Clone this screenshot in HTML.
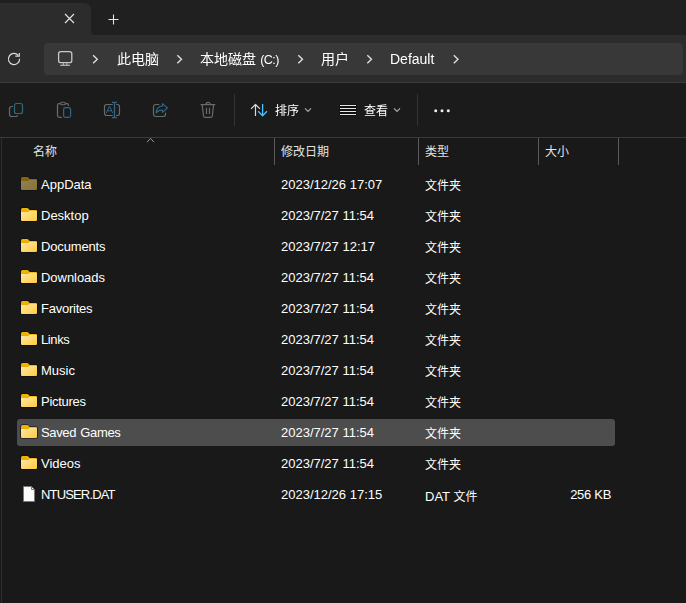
<!DOCTYPE html>
<html lang="zh-CN">
<head>
<meta charset="utf-8">
<title>Default</title>
<style>
html,body{margin:0;padding:0;}
body{width:686px;height:603px;overflow:hidden;background:#191919;position:relative;
  font-family:"Liberation Sans","Noto Sans CJK SC",sans-serif;color:#fff;}
.abs{position:absolute;}
#titlebar{left:0;top:0;width:686px;height:35px;background:#202020;}
#tab{left:0;top:3px;width:91px;height:32px;background:#2c2c2c;border-top-right-radius:7px;}
#tabfoot{left:91px;top:31px;width:4px;height:4px;background:#2c2c2c;}
#tabfoot i{display:block;width:4px;height:4px;background:#202020;border-bottom-left-radius:4px;}
#addr{left:0;top:35px;width:686px;height:47px;background:#2c2c2c;border-bottom:1px solid #3a3a3a;}
#addrbox{left:44px;top:43px;width:639px;height:32px;background:#383838;border-radius:4px;}
#toolbar{left:0;top:83px;width:686px;height:54px;background:#1b1b1b;}
#listtop{left:0;top:137px;width:686px;height:1px;background:#3a3a3a;}
#leftline{left:1px;top:138px;width:1px;height:465px;background:#2e2e2e;}
.crumb{will-change:transform;top:43px;height:32px;line-height:32px;font-size:14px;color:#fff;white-space:nowrap;}
.tsep{width:1px;top:94px;height:32px;background:#333;}
.tbtxt{will-change:transform;top:100px;height:22px;line-height:22px;font-size:12px;color:#fff;white-space:nowrap;}
.colsep{top:138px;width:1px;height:27px;background:#5a5a5a;}
.hd{top:142px;height:20px;line-height:20px;font-size:12px;color:#e4e4e4;white-space:nowrap;}
.row{left:0;width:686px;height:31px;}
.row span{position:absolute;top:0;height:31px;line-height:31px;font-size:13px;color:#fff;white-space:nowrap;}
.row .n{left:41px;}
.row .d{left:281px;}
.row .t{left:425px;font-size:12px;top:2px;}
.row .s{right:75px;}
.row svg{position:absolute;left:21px;top:8px;}
#sel{left:17px;top:419px;width:598px;height:27px;background:#4d4d4d;border-radius:3px;}
</style>
</head>
<body>
<div class="abs" id="titlebar"></div>
<div class="abs" id="tab"></div>
<div class="abs" id="tabfoot"><i></i></div>
<div class="abs" id="addr"></div>
<div class="abs" id="addrbox"></div>
<div class="abs" id="toolbar"></div>
<div class="abs" id="listtop"></div>
<div class="abs" id="leftline"></div>

<!-- breadcrumb text -->
<div class="abs crumb" style="left:117px">此电脑</div>
<div class="abs crumb" style="left:200px">本地磁盘<span style="font-size:12.5px;letter-spacing:-0.5px;word-spacing:1.2px"> (C:)</span></div>
<div class="abs crumb" style="left:321px">用户</div>
<div class="abs crumb" style="left:390px">Default</div>

<!-- toolbar -->
<div class="abs tsep" style="left:234px"></div>
<div class="abs tsep" style="left:417px"></div>
<div class="abs tbtxt" style="left:274.5px">排序</div>
<div class="abs tbtxt" style="left:364px">查看</div>

<!-- header -->
<div class="abs hd" style="left:33px">名称</div>
<div class="abs hd" style="left:281px">修改日期</div>
<div class="abs hd" style="left:425px">类型</div>
<div class="abs hd" style="left:545px">大小</div>
<div class="abs colsep" style="left:274px"></div>
<div class="abs colsep" style="left:418px"></div>
<div class="abs colsep" style="left:538px"></div>
<div class="abs colsep" style="left:618px"></div>

<div class="abs" id="sel"></div>

<div class="abs row" style="top:169px"><span class="n">AppData</span><span class="d">2023/12/26 17:07</span><span class="t">文件夹</span></div>
<div class="abs row" style="top:200px"><span class="n">Desktop</span><span class="d">2023/7/27 11:54</span><span class="t">文件夹</span></div>
<div class="abs row" style="top:231px"><span class="n" style="letter-spacing:-0.15px">Documents</span><span class="d">2023/7/27 12:17</span><span class="t">文件夹</span></div>
<div class="abs row" style="top:262px"><span class="n" style="letter-spacing:-0.04px">Downloads</span><span class="d">2023/7/27 11:54</span><span class="t">文件夹</span></div>
<div class="abs row" style="top:293px"><span class="n" style="letter-spacing:-0.23px">Favorites</span><span class="d">2023/7/27 11:54</span><span class="t">文件夹</span></div>
<div class="abs row" style="top:324px"><span class="n" style="letter-spacing:-0.4px">Links</span><span class="d">2023/7/27 11:54</span><span class="t">文件夹</span></div>
<div class="abs row" style="top:355px"><span class="n">Music</span><span class="d">2023/7/27 11:54</span><span class="t">文件夹</span></div>
<div class="abs row" style="top:386px"><span class="n" style="letter-spacing:-0.29px">Pictures</span><span class="d">2023/7/27 11:54</span><span class="t">文件夹</span></div>
<div class="abs row" style="top:417px"><span class="n" style="letter-spacing:-0.36px;word-spacing:1px">Saved Games</span><span class="d">2023/7/27 11:54</span><span class="t">文件夹</span></div>
<div class="abs row" style="top:448px"><span class="n">Videos</span><span class="d">2023/7/27 11:54</span><span class="t">文件夹</span></div>
<div class="abs row" style="top:479px"><span class="n" style="letter-spacing:-0.84px">NTUSER.DAT</span><span class="d">2023/12/26 17:15</span><span class="t"><em style="font-style:normal;font-size:13px">DAT </em>文件</span><span class="s" style="letter-spacing:-0.3px">256 KB</span></div>
<!--ICONS-->
<svg class="abs" style="left:0;top:0" width="686" height="603" viewBox="0 0 686 603" fill="none">
<defs>
<linearGradient id="fb" x1="0" y1="0" x2="0" y2="1"><stop offset="0" stop-color="#f2b600"/><stop offset="1" stop-color="#dd9a00"/></linearGradient>
<linearGradient id="ff" x1="0" y1="0" x2="1" y2="1"><stop offset="0" stop-color="#ffe9a8"/><stop offset="1" stop-color="#ffca3e"/></linearGradient>
<g id="folder">
<path d="M-0.6 1.6 a2 2 0 0 1 2-2.2 h5.2 l2 2 h6.4 a1.6 1.6 0 0 1 1.6 1.6 v9 a1.6 1.6 0 0 1 -1.6 1.6 h-14 a1.6 1.6 0 0 1 -1.6 -1.6 z" fill="#0a0a10"/>
<path d="M0 1.5 a1.5 1.5 0 0 1 1.5-1.5 h4.8 a1 1 0 0 1 .7.3 l1.7 1.7 h6.3 a1 1 0 0 1 1 1 v8 h-16 z" fill="url(#fb)"/>
<path d="M0 4 h6.6 a1.2 1.2 0 0 0 .8-.3 l.9-.7 a1.2 1.2 0 0 1 .8-.3 h5.9 a1 1 0 0 1 1 1 v8.3 a1 1 0 0 1 -1 1 h-14 a1 1 0 0 1 -1-1 z" fill="url(#ff)"/>
</g>
</defs>
<path d="M65 14 L74 23 M74 14 L65 23" stroke="#e6e6e6" stroke-width="1.1"/>
<path d="M108.5 19.5 H118.5 M113.5 14.5 V24.5" stroke="#e6e6e6" stroke-width="1.1"/>
<path d="M19.6 58.8 A5.6 5.6 0 1 1 18.2 55.3" stroke="#dcdcdc" stroke-width="1.2"/>
<path d="M15.3 56.2 H19.3 V52.9" stroke="#dcdcdc" stroke-width="1.2"/>
<rect x="58.6" y="51.6" width="13.2" height="11.1" rx="2.2" stroke="#c8c8c8" stroke-width="1.3"/>
<path d="M63.4 63 V65 M66.9 63 V65" stroke="#b0b0b0" stroke-width="1.1"/><path d="M60.3 65.3 H69.9" stroke="#b4b4b4" stroke-width="1.3"/>
<path d="M93.1 55.2 L97.3 59.2 L93.1 63.2" stroke="#dedede" stroke-width="1.4"/>
<path d="M177.3 55.2 L181.5 59.2 L177.3 63.2" stroke="#dedede" stroke-width="1.4"/>
<path d="M298.3 55.2 L302.5 59.2 L298.3 63.2" stroke="#dedede" stroke-width="1.4"/>
<path d="M367.3 55.2 L371.5 59.2 L367.3 63.2" stroke="#dedede" stroke-width="1.4"/>
<path d="M453.8 55.2 L458 59.2 L453.8 63.2" stroke="#dedede" stroke-width="1.4"/>
<rect x="14.5" y="103.5" width="8" height="10" rx="2" stroke="#2f6785" stroke-width="1.2"/>
<path d="M12.8 106.5 H11.7 A2.2 2.2 0 0 0 9.5 108.7 V114.3 A2.2 2.2 0 0 0 11.7 116.5 H15.8 A2.2 2.2 0 0 0 17.8 115.2" stroke="#6a6a6a" stroke-width="1.2"/>
<path d="M61.8 117.3 H59.3 A1.8 1.8 0 0 1 57.5 115.5 V105.2 A1.5 1.5 0 0 1 59 103.7 H67 A1.5 1.5 0 0 1 68.5 105.2 V106" stroke="#6a6a6a" stroke-width="1.3"/>
<rect x="60.6" y="102.2" width="4.8" height="2.6" rx="1.3" stroke="#6a6a6a" stroke-width="1.1" fill="#1b1b1b"/>
<rect x="63.6" y="107.6" width="7" height="9.8" rx="1.8" stroke="#2f6785" stroke-width="1.2"/>
<path d="M112.8 104.5 H106.7 A2.2 2.2 0 0 0 104.5 106.7 V113.3 A2.2 2.2 0 0 0 106.7 115.5 H112.8 M116.2 104.5 H117.3 A2.2 2.2 0 0 1 119.5 106.7 V113.3 A2.2 2.2 0 0 1 117.3 115.5 H116.2" stroke="#6a6a6a" stroke-width="1.2"/>
<path d="M114.5 102.2 V117.8 M112 102.3 H117 M112 117.7 H117" stroke="#2f6785" stroke-width="1.3"/>
<path d="M106.3 113 L109.5 106 L112.7 113 M107.4 110.8 H111.6" stroke="#2f6785" stroke-width="1"/>
<path d="M159.3 104.5 H155.7 A2.2 2.2 0 0 0 153.5 106.7 V114.3 A2.2 2.2 0 0 0 155.7 116.5 H163.3 A2.2 2.2 0 0 0 165.5 114.3 V112.8" stroke="#6a6a6a" stroke-width="1.2"/>
<path d="M162.5 103.6 L167.4 108 L162.5 112.4 V110.2 C159.6 110 157.6 110.9 156.1 112.9 C156.4 109 158.6 106.3 162.5 105.9 Z" stroke="#2f6785" stroke-width="1.1" stroke-linejoin="round"/>
<path d="M200.5 104.6 H215.3 M206 104.4 A2.1 2.1 0 0 1 210.2 104.4 M202.2 104.8 L203.5 116 A1.6 1.6 0 0 0 205.1 117.4 H210.7 A1.6 1.6 0 0 0 212.3 116 L213.6 104.8 M206.5 107.8 V114 M209.5 107.8 V114" stroke="#6a6a6a" stroke-width="1.2"/>
<path d="M255.5 116 V104.6 M251 108.9 L255.5 104.5 L260 108.9" stroke="#dadada" stroke-width="1.2" stroke-linejoin="round"/>
<path d="M262.6 104 V115.6 M258.2 111.2 L262.6 115.7 L267 111.2" stroke="#4cc2ff" stroke-width="1.3" stroke-linejoin="round"/>
<path d="M305 108.4 L308 111.5 L311 108.4" stroke="#a8a8a8" stroke-width="1.2"/>
<path d="M394 108.4 L397 111.5 L400 108.4" stroke="#a8a8a8" stroke-width="1.2"/>
<rect x="339.5" y="104.4" width="17" height="11.2" fill="#0e0e0e"/>
<rect x="340" y="105" width="16" height="1" fill="#e6e6e6"/>
<rect x="340" y="108" width="16" height="1" fill="#e6e6e6"/>
<rect x="340" y="111" width="16" height="1" fill="#e6e6e6"/>
<rect x="340" y="114" width="16" height="1" fill="#e6e6e6"/>
<circle cx="435.7" cy="110.7" r="1.5" fill="#f0f0f0"/>
<circle cx="442" cy="110.7" r="1.5" fill="#f0f0f0"/>
<circle cx="448.3" cy="110.7" r="1.5" fill="#f0f0f0"/>
<path d="M147 142.2 L150.5 138.4 L154 142.2" stroke="#9a9a9a" stroke-width="1"/>
<use href="#folder" x="21" y="177" opacity="0.5"/>
<use href="#folder" x="21" y="208"/>
<use href="#folder" x="21" y="239"/>
<use href="#folder" x="21" y="270"/>
<use href="#folder" x="21" y="301"/>
<use href="#folder" x="21" y="332"/>
<use href="#folder" x="21" y="363"/>
<use href="#folder" x="21" y="394"/>
<use href="#folder" x="21" y="425"/>
<use href="#folder" x="21" y="456"/>
<path d="M23.5 486.5 H31.5 L34.5 489.5 V501.5 H23.5 Z" fill="#fbfbfb" stroke="#7c7875" stroke-width="1"/>
<path d="M31.5 486.5 V489.5 H34.5" fill="none" stroke="#7c7875" stroke-width="1"/>
</svg>
<!--/ICONS-->
</body>
</html>
